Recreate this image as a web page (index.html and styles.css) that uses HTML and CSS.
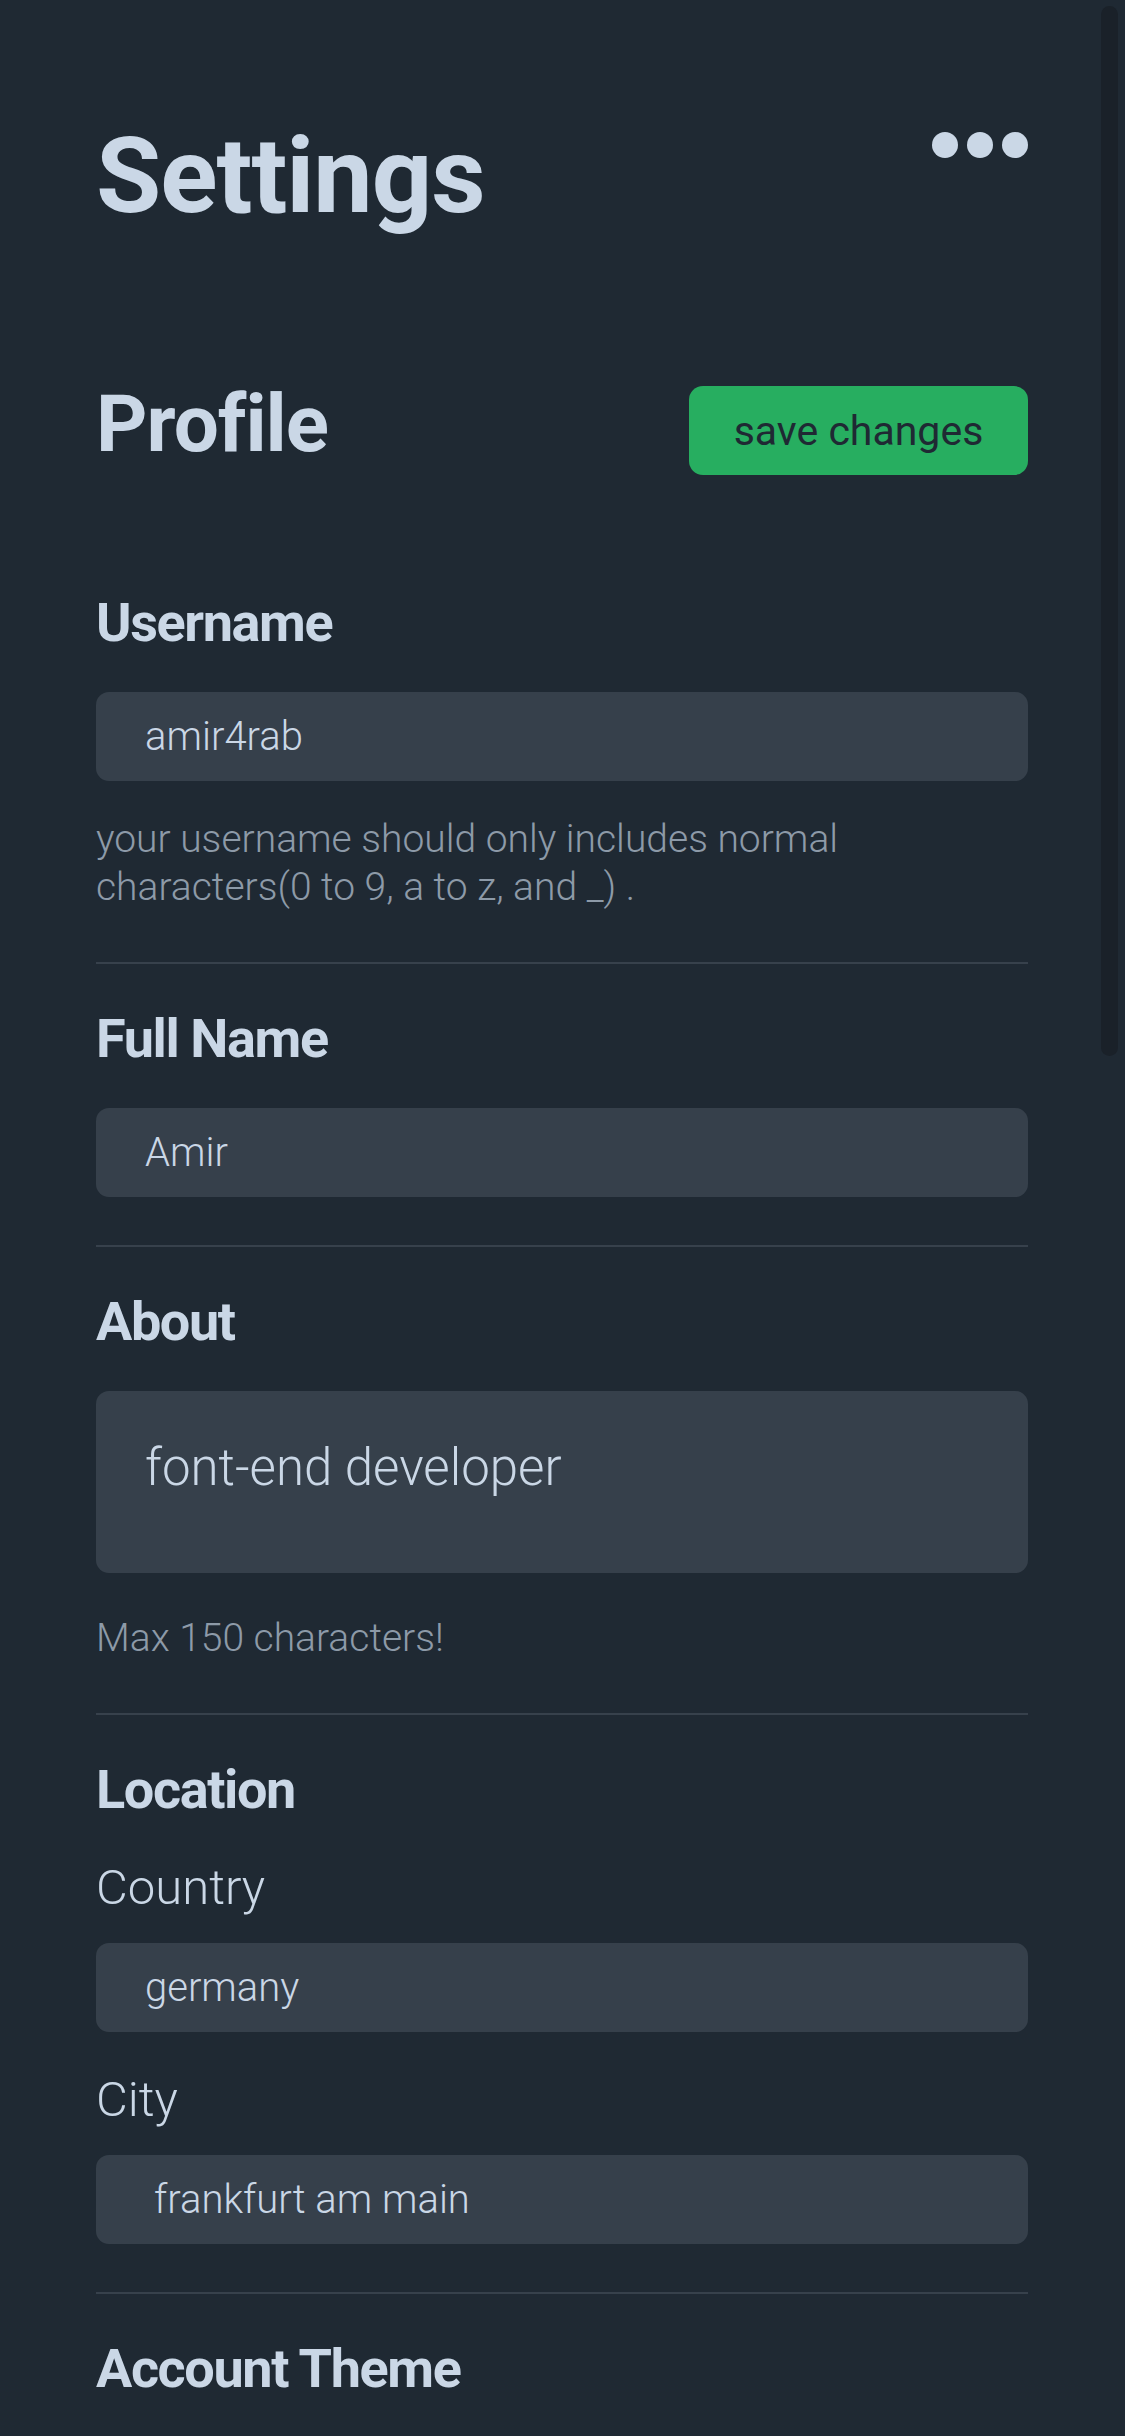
FILE: index.html
```html
<!DOCTYPE html>
<html lang="en">
<head>
<meta charset="utf-8">
<title>Settings</title>
<link rel="stylesheet" href="styles.css">
</head>
<body>
<div class="scroll-thumb"></div>
<main class="page">
  <header class="top">
    <h1 class="title">Settings</h1>
    <button class="more" aria-label="more">
      <span class="dot"></span><span class="dot"></span><span class="dot"></span>
    </button>
  </header>

  <div class="profile-row">
    <h2 class="profile">Profile</h2>
    <button class="save">save changes</button>
  </div>

  <section class="group first">
    <h3 class="label">Username</h3>
    <div class="field">amir4rab</div>
    <p class="hint">your username should only includes normal characters(0 to 9, a to z, and _) .</p>
  </section>

  <section class="group">
    <h3 class="label">Full Name</h3>
    <div class="field">Amir</div>
  </section>

  <section class="group">
    <h3 class="label">About</h3>
    <div class="field area">font-end developer</div>
    <p class="hint single">Max 150 characters!</p>
  </section>

  <section class="group">
    <h3 class="label">Location</h3>
    <div class="sub">Country</div>
    <div class="field sm">germany</div>
    <div class="sub">City</div>
    <div class="field sm indent">frankfurt am main</div>
  </section>

  <section class="group last">
    <h3 class="label">Account Theme</h3>
  </section>
</main>
</body>
</html>
```

FILE: styles.css
```css
html {
  scrollbar-width: none;
}
html::-webkit-scrollbar {
  display: none;
}
body {
  margin: 0;
  background: #1f2933;
  color: #cad7e6;
  font-family: Roboto, "Liberation Sans", sans-serif;
}
.scroll-thumb {
  position: fixed;
  top: 6px;
  right: 7px;
  width: 17px;
  height: 1050px;
  border-radius: 9px;
  background: #1a2129;
}
.page {
  padding: 0 97px 300px 96px;
}
.top {
  display: flex;
  justify-content: space-between;
  align-items: flex-start;
  padding-top: 112px;
}
.title {
  margin: 0;
  font-size: 106px;
  line-height: 128px;
  font-weight: 700;
  letter-spacing: -1px;
}
.more {
  display: flex;
  gap: 9px;
  margin-top: 20px;
  padding: 0;
  border: 0;
  background: none;
}
.dot {
  width: 26px;
  height: 26px;
  border-radius: 50%;
  background: #cad7e6;
}
.profile-row {
  display: flex;
  justify-content: space-between;
  align-items: flex-start;
  margin-top: 146px;
}
.profile {
  margin: 0;
  font-size: 80px;
  line-height: 77px;
  font-weight: 700;
  letter-spacing: -1px;
}
.save {
  width: 339px;
  height: 89px;
  border: 0;
  border-radius: 14px;
  background: #27ae60;
  color: #1f2933;
  font-family: Roboto, "Liberation Sans", sans-serif;
  font-size: 41px;
  font-weight: 400;
  padding: 0;
}
.group {
  padding-top: 43px;
  padding-bottom: 48px;
  border-bottom: 2px solid #37414c;
}
.group.first {
  padding-top: 116px;
}
.group.last {
  border-bottom: 0;
}
.label {
  margin: 0 0 37px;
  font-size: 54px;
  line-height: 64px;
  font-weight: 700;
  letter-spacing: -1.4px;
}
.field {
  display: flex;
  align-items: center;
  height: 89px;
  padding-left: 49px;
  border-radius: 13px;
  background: #36404b;
  font-size: 40px;
  font-weight: 300;
  color: #cad7e6;
}
.field.area {
  height: 182px;
  align-items: flex-start;
  padding-top: 47px;
  box-sizing: border-box;
  font-size: 51px;
}
.field.indent {
  padding-left: 58px;
}
.hint {
  margin: 34px 0 3px;
  font-size: 39px;
  line-height: 48px;
  font-weight: 300;
  color: #8d9aa8;
}
.hint.single {
  margin-top: 41px;
  font-size: 39px;
}
.sub {
  font-size: 49px;
  line-height: 60px;
  font-weight: 300;
  margin-top: -1px;
  margin-bottom: 25px;
}
.field.sm + .sub {
  margin-top: 38px;
}
```
